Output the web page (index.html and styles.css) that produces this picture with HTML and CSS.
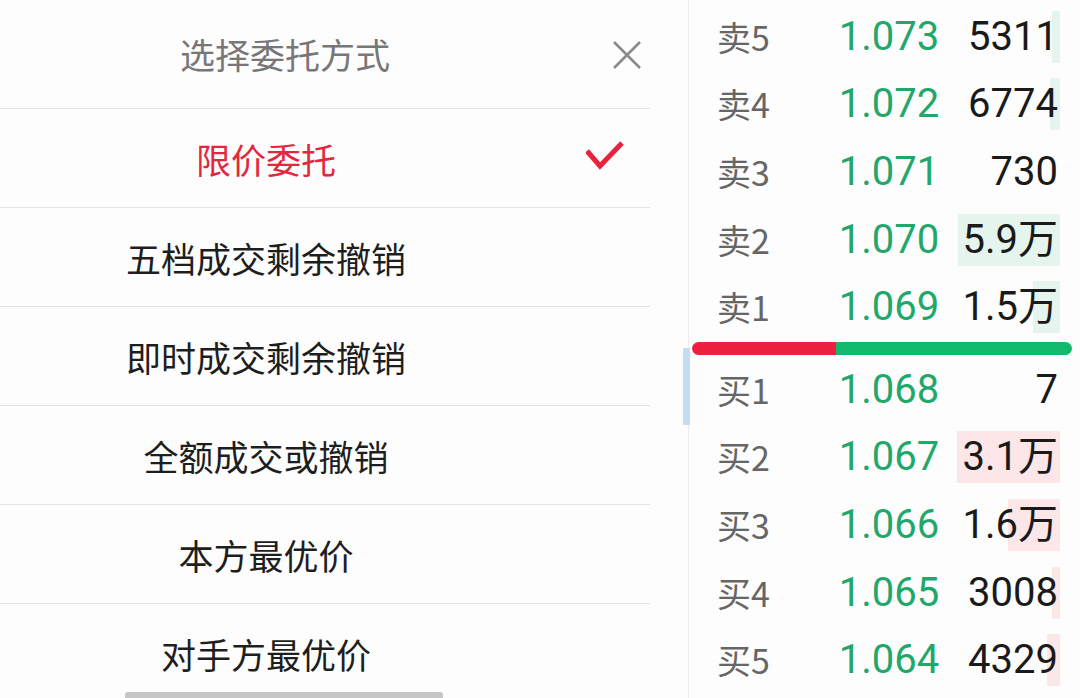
FILE: index.html
```html
<!DOCTYPE html>
<html lang="zh-CN">
<head>
<meta charset="utf-8">
<title>选择委托方式</title>
<link rel="stylesheet" href="styles.css">
</head>
<body>
<div class="screen">
  <section class="sheet">
    <header class="sheet-head">
      <div class="sheet-title">选择委托方式</div>
      <svg class="close" width="30" height="30" viewBox="0 0 30 30"><path d="M2 2 L28 28 M28 2 L2 28" stroke="#8a8a8a" stroke-width="2.6" fill="none"/></svg>
    </header>
    <ul class="options">
      <li class="option selected"><span class="opt-label">限价委托</span><svg class="check" width="38" height="30" viewBox="0 0 38 30"><polyline points="1,11 14,26 36,3" stroke="#e8233d" stroke-width="5" fill="none" stroke-linejoin="miter"/></svg></li>
      <li class="option"><span class="opt-label">五档成交剩余撤销</span></li>
      <li class="option"><span class="opt-label">即时成交剩余撤销</span></li>
      <li class="option"><span class="opt-label">全额成交或撤销</span></li>
      <li class="option"><span class="opt-label">本方最优价</span></li>
      <li class="option last"><span class="opt-label">对手方最优价</span></li>
    </ul>
    <div class="scroll-thumb"></div>
  </section>
  <div class="focus-mark"></div>
  <section class="book">
    <div class="side sell">
      <div class="level"><span class="lv">卖5</span><span class="px">1.073</span><span class="vol"><i class="vbar" style="width:8px"></i><b>5311</b></span></div>
      <div class="level"><span class="lv">卖4</span><span class="px">1.072</span><span class="vol"><i class="vbar" style="width:10px"></i><b>6774</b></span></div>
      <div class="level"><span class="lv">卖3</span><span class="px">1.071</span><span class="vol"><b>730</b></span></div>
      <div class="level"><span class="lv">卖2</span><span class="px">1.070</span><span class="vol"><i class="vbar" style="width:102px"></i><b>5.9万</b></span></div>
      <div class="level"><span class="lv">卖1</span><span class="px">1.069</span><span class="vol"><i class="vbar" style="width:27px"></i><b>1.5万</b></span></div>
    </div>
    <div class="ratio"><span class="ratio-buy" style="width:144px"></span><span class="ratio-sell"></span></div>
    <div class="side buy">
      <div class="level"><span class="lv">买1</span><span class="px">1.068</span><span class="vol"><b>7</b></span></div>
      <div class="level"><span class="lv">买2</span><span class="px">1.067</span><span class="vol"><i class="vbar" style="width:103px"></i><b>3.1万</b></span></div>
      <div class="level"><span class="lv">买3</span><span class="px">1.066</span><span class="vol"><i class="vbar" style="width:52px"></i><b>1.6万</b></span></div>
      <div class="level"><span class="lv">买4</span><span class="px">1.065</span><span class="vol"><i class="vbar" style="width:8px"></i><b>3008</b></span></div>
      <div class="level"><span class="lv">买5</span><span class="px">1.064</span><span class="vol"><i class="vbar" style="width:13px"></i><b>4329</b></span></div>
    </div>
  </section>
</div>
</body>
</html>
```

FILE: styles.css
```css
* { box-sizing: border-box; }
html, body { margin: 0; padding: 0; }
body {
  width: 1080px;
  height: 698px;
  overflow: hidden;
  background: #fdfdfd;
  font-family: "Noto Sans CJK SC", "Noto Sans", sans-serif;
}
.screen {
  position: relative;
  display: flex;
  width: 1080px;
  height: 698px;
}
.sheet {
  position: relative;
  width: 689px;
  height: 698px;
  border-right: 1px solid #ececec;
  background: #fdfdfd;
}
.sheet-head {
  display: flex;
  align-items: center;
  width: 650px;
  height: 109px;
  border-bottom: 1px solid #e4e4e4;
}
.sheet-title {
  flex: 1;
  text-align: center;
  font-size: 35px;
  color: #777;
  line-height: 1;
  padding-bottom: 2px;
}
.close {
  margin-left: 42px;
  margin-right: 8px;
  margin-top: 1px;
}
.options {
  list-style: none;
  margin: 0;
  padding: 0;
  width: 650px;
}
.option {
  display: grid;
  grid-template-columns: 532px 38px;
  column-gap: 54px;
  align-items: center;
  height: 99px;
  border-bottom: 1px solid #e4e4e4;
}
.option.last { border-bottom: none; }
.opt-label {
  text-align: center;
  font-size: 35px;
  line-height: 1;
  color: #1e1e1e;
  white-space: nowrap;
}
.option.selected .opt-label { color: #e3283e; }
.check { margin-top: -6px; }
.scroll-thumb {
  position: absolute;
  left: 125px;
  bottom: 0;
  width: 318px;
  height: 6px;
  border-radius: 3px 3px 0 0;
  background: #c6c6c6;
}
.focus-mark {
  position: absolute;
  left: 683px;
  top: 348px;
  width: 7px;
  height: 77px;
  background: #c5ddf3;
}
.book {
  width: 391px;
  padding-top: 3px;
  padding-left: 3px;
  padding-right: 8px;
}
.level {
  display: grid;
  grid-template-columns: 105px 134px 1fr;
  align-items: center;
  height: 67.6px;
  padding-left: 25px;
}
.lv {
  font-size: 34px;
  line-height: 1;
  color: #666;
  white-space: nowrap;
}
.px {
  text-align: center;
  font-family: Roboto, "Noto Sans", sans-serif;
  font-size: 40px;
  line-height: 1;
  color: #22a76b;
  white-space: nowrap;
}
.vol {
  position: relative;
  display: flex;
  justify-content: flex-end;
  align-items: center;
  height: 52px;
  margin-right: 12px;
  white-space: nowrap;
}
.vol b {
  position: relative;
  font-weight: 400;
  font-family: Roboto, "Noto Sans", "Noto Sans CJK SC", sans-serif;
  font-size: 40px;
  line-height: 1;
  color: #1a1a1a;
  padding-right: 2px;
}
.vbar {
  position: absolute;
  right: 0;
  top: 0;
  bottom: 0;
}
.sell .vbar { background: #e5f4ec; }
.buy .vbar { background: #fce6e8; }
.ratio {
  display: flex;
  height: 13px;
  margin: 1px 0 1px 0;
  border-radius: 7px;
  overflow: hidden;
}
.ratio-buy { background: #ef1f41; }
.ratio-sell { flex: 1; background: #10b96b; }
```
